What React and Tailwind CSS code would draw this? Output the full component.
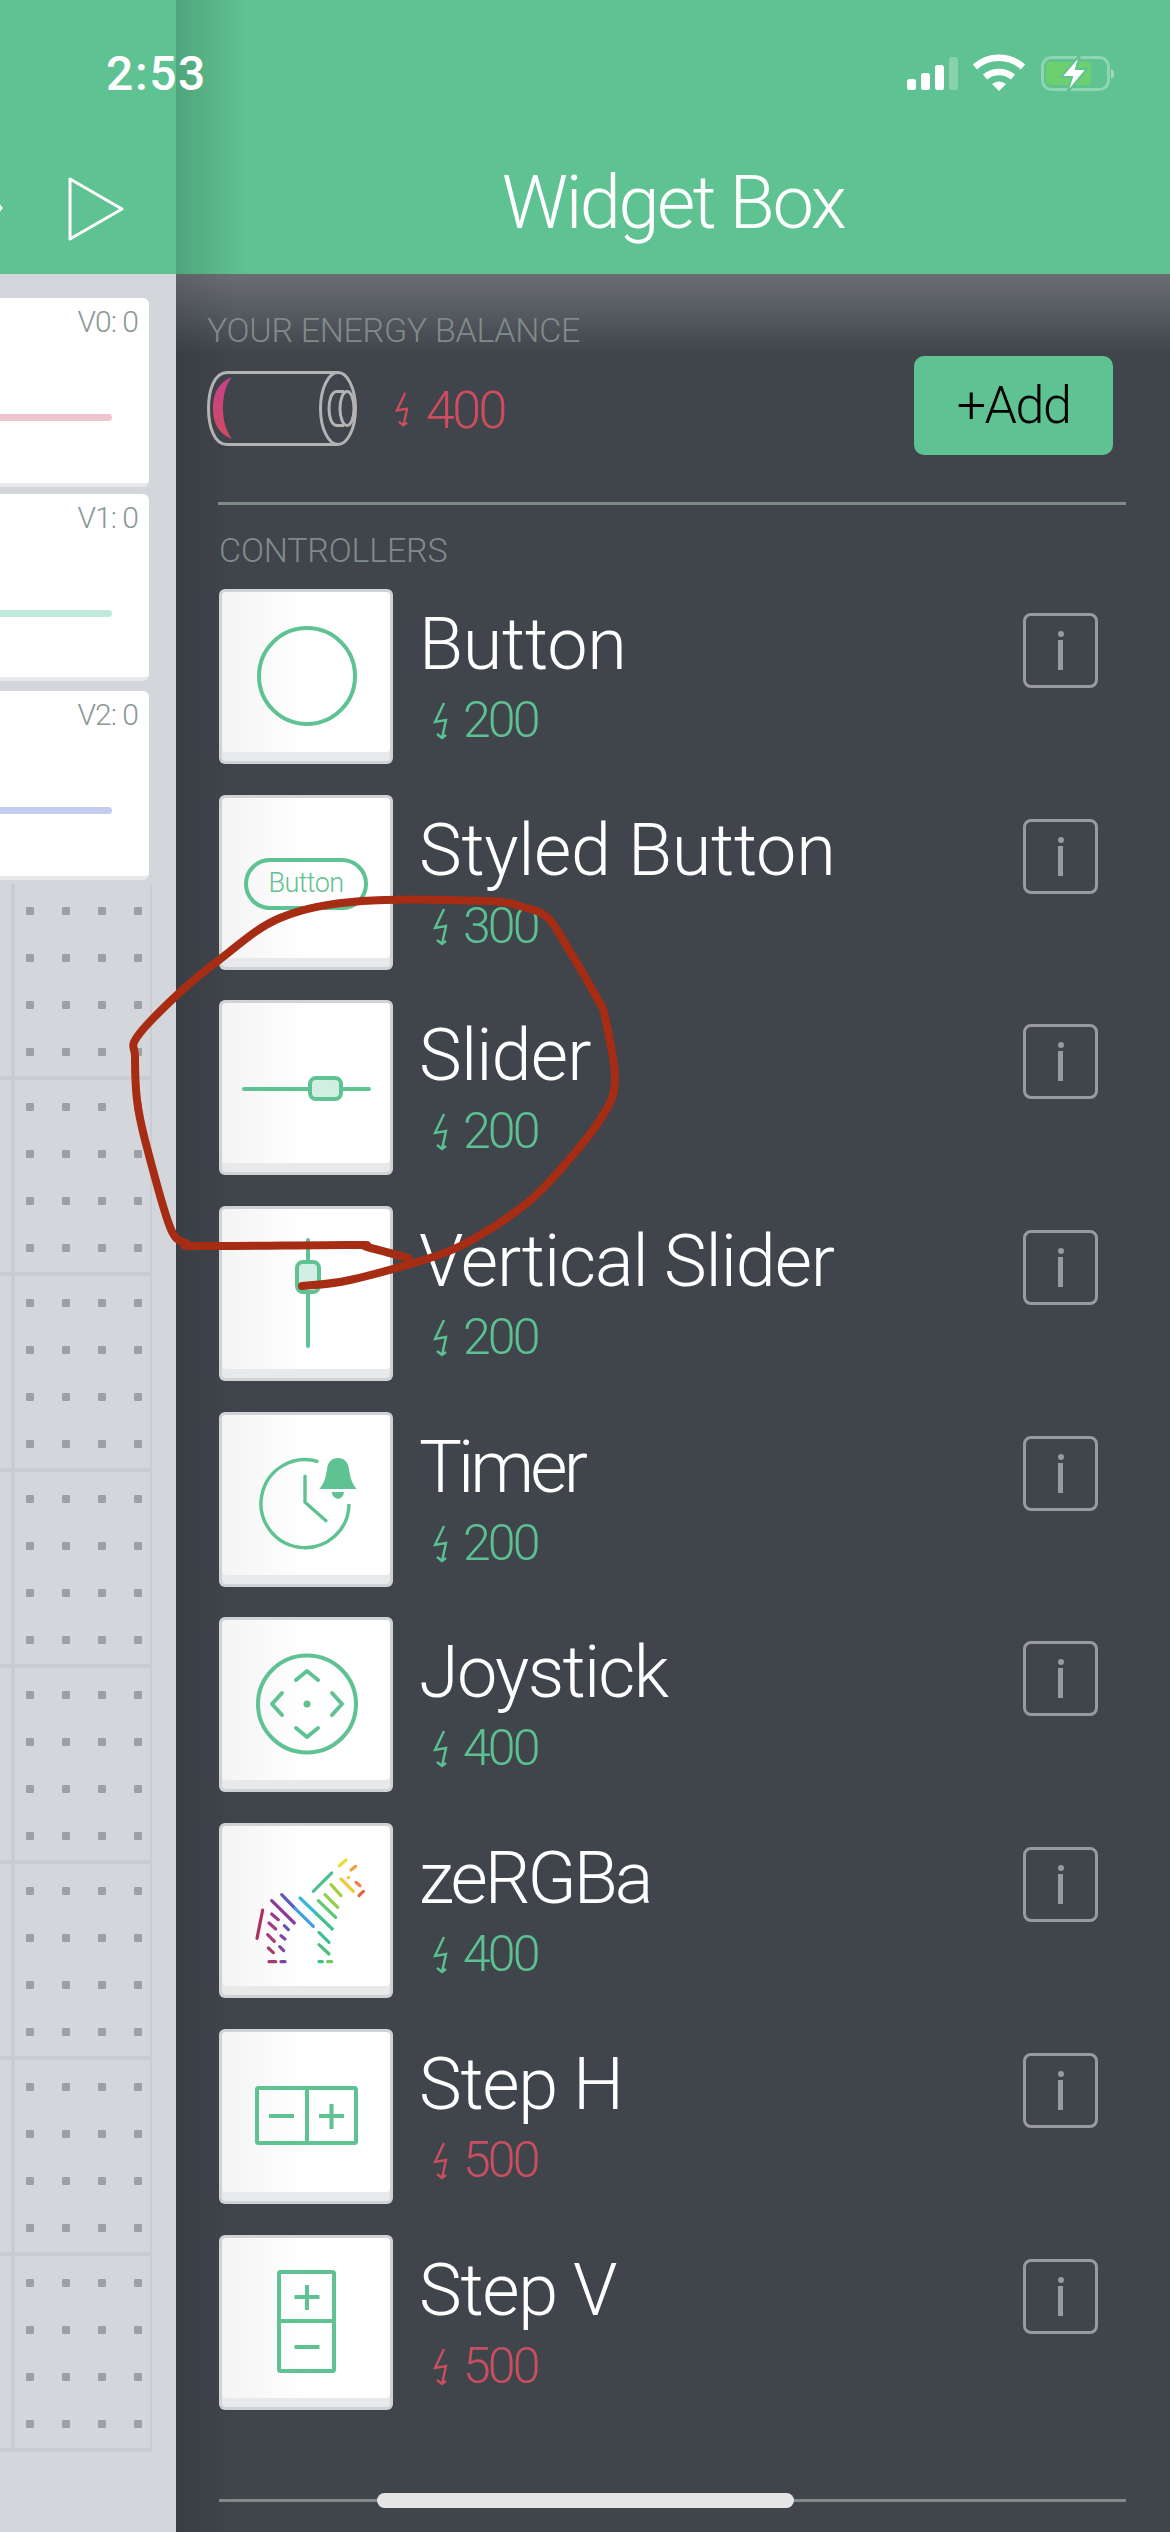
const GREEN = "#5fc292";
const RED = "#cf4b5f";

const font = { fontFamily: "Roboto, sans-serif" };

function Bolt({ color, className }) {
  return (
    <svg viewBox="0 0 15 38" className={className} fill="none" stroke={color} strokeWidth="2.4">
      <path d="M11 1 L2 20 L13 18 L9 36 M4 32 L9 36 L13 33" />
    </svg>
  );
}

function Price({ value, red }) {
  return (
    <div className={`flex items-center h-[50px] pl-[14px] ${red ? "text-[#c94f60]" : "text-[#5cc092]"}`}>
      <Bolt color={red ? "#c94f60" : "#5cc092"} className="w-[15px] h-[38px] mt-[2px]" />
      <span className="ml-[15px] text-[50px] leading-[50px] font-light tracking-[-2.9px]">{value}</span>
    </div>
  );
}

// zebra stripes, measured on a 3x crop
const ZEBRA = [
  ["#b03060", 53, 183, 36, 268],
  ["#8a3a98", 80, 155, 148, 222],
  ["#5a58c0", 110, 137, 150, 178],
  ["#3f9fe0", 150, 178, 205, 232],
  ["#38b8d8", 165, 147, 215, 195],
  ["#3fc08e", 215, 195, 262, 240],
  ["#5cc870", 220, 155, 272, 205],
  ["#90d048", 240, 137, 278, 175],
  ["#50c090", 205, 127, 260, 72],
  ["#a0d040", 258, 107, 288, 140],
  ["#f0c838", 288, 90, 325, 127],
  ["#e8dc38", 283, 50, 303, 33],
  ["#f0a040", 318, 63, 332, 52],
  ["#f08050", 333, 100, 345, 110],
  ["#ee6040", 342, 140, 355, 127],
  ["#f0c040", 310, 85, 311, 86],
  ["#9a3a8c", 80, 195, 100, 212],
  ["#a83888", 72, 222, 92, 240],
  ["#a83878", 68, 257, 88, 277],
  ["#a8386f", 70, 297, 85, 311],
  ["#a83870", 72, 338, 92, 338],
  ["#6a50b0", 118, 230, 130, 242],
  ["#7a48a8", 108, 260, 120, 270],
  ["#7d46a0", 104, 293, 116, 305],
  ["#7a46a0", 108, 338, 120, 338],
  ["#3cc090", 222, 250, 252, 280],
  ["#48c078", 222, 287, 252, 315],
  ["#40c088", 222, 338, 232, 338],
  ["#70c860", 248, 338, 260, 338],
];

function Glyph({ name }) {
  const line = { fill: "none", stroke: GREEN, strokeWidth: 4, strokeLinecap: "round", strokeLinejoin: "round" };
  if (name === "styled") {
    return (
      <div className="absolute left-[25px] top-[63px] w-[124px] h-[52px] rounded-full border-[4px] border-[#5fc292] flex items-center justify-center text-[27px] leading-none font-light tracking-[-0.6px] text-[#5fc292]">
        Button
      </div>
    );
  }
  return (
    <svg viewBox="0 0 174 175" className="absolute inset-0 w-[174px] h-[175px]">
      {name === "button" && <circle cx="88" cy="87" r="48" {...line} />}
      {name === "slider" && (
        <g>
          <path d="M25 89 H91 M122 89 H150" {...line} />
          <rect x="91" y="78" width="31" height="21" rx="6" fill="#d0eee2" stroke={GREEN} strokeWidth="4" />
        </g>
      )}
      {name === "vslider" && (
        <g>
          <path d="M89 34 V56 M89 86 V140" {...line} />
          <rect x="78" y="56" width="22" height="30" rx="6" fill="#d0eee2" stroke={GREEN} strokeWidth="4" />
        </g>
      )}
      {name === "timer" && (
        <g>
          <path d="M99.3 49.7 A44 44 0 1 0 130 92" {...line} strokeWidth="3.4" strokeLinecap="butt" />
          <path d="M86 64.3 V90.3 L107 108.7" {...line} strokeWidth="3.4" />
          <path d="M100.3 77 C106 70 107 64 108 57 C109 49 114 46 119 46 C124 46 129 49 130 57 C131 64 132 70 137.7 77 Z" fill={GREEN} />
          <path d="M112.7 80 H125 C124 89 114 89 112.7 80 Z" fill={GREEN} />
        </g>
      )}
      {name === "joystick" && (
        <g>
          <ellipse cx="88" cy="87" rx="49" ry="48.5" {...line} />
          <circle cx="88" cy="87" r="3.5" fill={GREEN} />
          <path d="M77 63 L88 54 L99 63 M77 111 L88 120 L99 111 M63 76 L53 87 L63 98 M113 76 L123 87 L113 98" {...line} />
        </g>
      )}
      {name === "zergba" &&
        ZEBRA.map(([c, x1, y1, x2, y2], i) => (
          <line
            key={i}
            x1={x1 / 3 + 26}
            y1={y1 / 3 + 26}
            x2={x2 / 3 + 26}
            y2={y2 / 3 + 26}
            stroke={c}
            strokeWidth="3.2"
            strokeLinecap="round"
          />
        ))}
      {name === "steph" && (
        <g>
          <rect x="38" y="59" width="99" height="55" rx="1.5" {...line} />
          <path d="M88 59 V114 M50 87 H75 M100 87 H125 M112.5 75 V100" {...line} strokeLinecap="butt" />
        </g>
      )}
      {name === "stepv" && (
        <g>
          <rect x="60" y="37" width="55" height="99" rx="1.5" {...line} />
          <path d="M60 86 H115 M75.5 62 H100.5 M88 50 V75 M75.5 112 H100.5" {...line} strokeLinecap="butt" />
        </g>
      )}
    </svg>
  );
}

function Tile({ name }) {
  return (
    <div className="relative shrink-0 w-[174px] h-[175px] rounded-[6px] bg-[#d0d3d6] p-[3px]">
      <div className="h-full rounded-[4px] bg-[#e8e9eb]">
        <div className="h-[160px] rounded-[4px] bg-gradient-to-r from-[#f4f4f5] via-white to-white" />
      </div>
      <Glyph name={name} />
    </div>
  );
}

function InfoButton() {
  return (
    <div className="ml-auto mt-[24px] w-[75px] h-[75px] rounded-[8px] border-[3px] border-[#979b9e] flex flex-col items-center pt-[15px]">
      <div className="w-[6px] h-[6px] rounded-full bg-[#979b9e]" />
      <div className="mt-[3px] w-[5px] h-[30px] bg-[#979b9e]" />
    </div>
  );
}

function WidgetRow({ icon, title, price, red, tracking }) {
  return (
    <div className="flex h-[175px] mb-[30.7px]">
      <Tile name={icon} />
      <div className="ml-[26px] pt-[16px]">
        <div className={`text-[72px] leading-[80px] font-light text-white whitespace-nowrap ${tracking}`}>{title}</div>
        <div className="mt-[10px]">
          <Price value={price} red={red} />
        </div>
      </div>
      <InfoButton />
    </div>
  );
}

function ValueCard({ label, color, height, gap }) {
  return (
    <div className={`relative w-[149px] ${height} ${gap} bg-white rounded-r-[6px] border-b-[4px] border-[#e8e9eb]`}>
      <div className="text-right pr-[11px] pt-[6px] text-[30px] leading-[36px] font-light tracking-[-1px] text-[#8b9895]">{label}</div>
      <div className={`mt-[74px] w-[112px] h-[7px] rounded-r-full ${color}`} />
    </div>
  );
}

function GridCell() {
  return (
    <div className="h-[196px] w-[152px] border-b-[4px] border-r-[2px] border-[#c9cdd1] flex">
      <div className="ml-[11px] w-[4px] bg-[#c9cdd1]" />
      <div className="ml-[11px] pt-[23px] flex flex-col gap-[39px]">
        {[0, 1, 2, 3].map((r) => (
          <div key={r} className="flex gap-[28px]">
            {[0, 1, 2, 3].map((c) => (
              <div key={c} className="w-[8px] h-[8px] rounded-[1px] bg-[#9da1a5]" />
            ))}
          </div>
        ))}
      </div>
    </div>
  );
}

function StatusBar() {
  return (
    <div className="absolute inset-x-0 top-0 h-[110px] text-white">
      <div className="absolute left-[106px] top-[46px] text-[48px] leading-[56px] font-medium tracking-[1.6px]">2:53</div>
      <svg viewBox="880 40 290 60" className="absolute left-[880px] top-[40px] w-[290px] h-[60px]">
        <rect x="907" y="79" width="9" height="11" rx="2.5" fill="#fff" />
        <rect x="921" y="73" width="9" height="17" rx="2.5" fill="#fff" />
        <rect x="935" y="65" width="9" height="25" rx="2.5" fill="#fff" />
        <rect x="949" y="57" width="9" height="33" rx="2.5" fill="#fff" fillOpacity="0.25" />
        <path d="M975 67 A36 36 0 0 1 1023 67" stroke="#fff" strokeWidth="6.5" fill="none" />
        <path d="M985 77 A22 22 0 0 1 1013 77" stroke="#fff" strokeWidth="6.5" fill="none" />
        <path d="M992 84 A11 11 0 0 1 1006 84 L999 91 Z" fill="#fff" />
        <rect x="1042.5" y="57.5" width="66" height="32" rx="9" fill="none" stroke="#fff" strokeOpacity="0.3" strokeWidth="3" />
        <rect x="1046" y="62" width="45" height="23" rx="4" fill="#6dd06e" />
        <path d="M1111 69 C1115 70 1115 78 1111 79 Z" fill="#fff" fillOpacity="0.4" />
        <path d="M1080 55 L1061 77 H1072 L1067 93 L1087 69 H1076 Z" fill="#fff" stroke={GREEN} strokeWidth="2" />
      </svg>
    </div>
  );
}

// hand-drawn circle on top of the screenshot
const SCRIBBLE = [
  [302, 1286], [350, 1280], [433, 1257], [477, 1237], [527, 1203], [560, 1170], [600, 1120], [615, 1081],
  [605, 1017], [598, 1000], [569, 950], [548, 918], [523, 907], [487, 901], [362, 901], [280, 918],
  [219, 960], [177, 995], [137, 1037], [135, 1057], [137, 1100], [145, 1140], [170, 1227], [186, 1243],
  [200, 1246], [353, 1245], [367, 1247], [408, 1258],
];

function smoothPath(pts) {
  let d = `M${pts[0][0]} ${pts[0][1]}`;
  for (let i = 0; i < pts.length - 1; i++) {
    const p0 = pts[Math.max(i - 1, 0)];
    const p1 = pts[i];
    const p2 = pts[i + 1];
    const p3 = pts[Math.min(i + 2, pts.length - 1)];
    d += ` C${p1[0] + (p2[0] - p0[0]) / 6} ${p1[1] + (p2[1] - p0[1]) / 6} ${p2[0] - (p3[0] - p1[0]) / 6} ${p2[1] - (p3[1] - p1[1]) / 6} ${p2[0]} ${p2[1]}`;
  }
  return d;
}

const WIDGETS = [
  { icon: "button", title: "Button", price: "200", tracking: "tracking-[-0.3px]" },
  { icon: "styled", title: "Styled Button", price: "300", tracking: "tracking-[-0.3px]" },
  { icon: "slider", title: "Slider", price: "200", tracking: "tracking-[-0.8px]" },
  { icon: "vslider", title: "Vertical Slider", price: "200", tracking: "tracking-[-1.1px]" },
  { icon: "timer", title: "Timer", price: "200", tracking: "tracking-[-3.9px]" },
  { icon: "joystick", title: "Joystick", price: "400", tracking: "tracking-[-1.7px]" },
  { icon: "zergba", title: "zeRGBa", price: "400", tracking: "tracking-[-3px]" },
  { icon: "steph", title: "Step H", price: "500", red: true, tracking: "tracking-[-1.3px]" },
  { icon: "stepv", title: "Step V", price: "500", red: true, tracking: "tracking-[-1.3px]" },
];

export default function App() {
  return (
    <div className="relative flex w-[1170px] h-[2532px] overflow-hidden bg-[#d3d6da]" style={font}>
      <div className="w-[176px] shrink-0 overflow-hidden">
        <div className="relative h-[274px] bg-[#5fc292]">
          <svg viewBox="0 0 176 274" className="absolute inset-0 w-[176px] h-[274px]" fill="none" stroke="#fff" strokeWidth="3" strokeLinejoin="round">
            <path d="M70 179 V239 L122 209 Z" />
            <path d="M-3 203 L1 208 L-3 213" />
          </svg>
        </div>
        <div className="pt-[24px]">
          <ValueCard label="V0: 0" color="bg-[#eec5cf]" height="h-[189px]" gap="mb-[7px]" />
          <ValueCard label="V1: 0" color="bg-[#bfeadb]" height="h-[187px]" gap="mb-[10px]" />
          <ValueCard label="V2: 0" color="bg-[#c5cdee]" height="h-[189px]" gap="mb-0" />
        </div>
        <div className="pt-[4px]">
          {[0, 1, 2, 3, 4, 5, 6, 7].map((i) => (
            <GridCell key={i} />
          ))}
        </div>
      </div>

      <div className="relative flex-1 min-w-0 bg-[#3f454b]">
        <div className="relative h-[274px] bg-[#5fc292] flex items-center justify-center pt-[132px]">
          <div className="absolute inset-y-0 left-0 w-[70px] bg-gradient-to-r from-black/15 to-transparent" />
          <h1 className="text-[74px] leading-[88px] font-light tracking-[-2.5px] text-white">Widget Box</h1>
        </div>
        <div className="absolute left-0 right-0 top-[274px] h-[80px] bg-gradient-to-b from-[#6a6e73] to-transparent" />
        <div className="absolute left-0 top-[274px] bottom-0 w-[60px] bg-gradient-to-r from-black/10 to-transparent" />

        <div className="relative">
          <div className="pl-[31px] pt-[36px] text-[34px] leading-[40px] font-light tracking-[-0.3px] text-[#7f8b88]">YOUR ENERGY BALANCE</div>
          <div className="flex items-center h-[99px] mt-[6px] pl-[31px] pr-[57px]">
            <svg viewBox="0 0 150 75" className="w-[150px] h-[75px] mt-[5px]" fill="none" stroke="#b3b3b3" strokeWidth="3">
              <defs>
                <linearGradient id="charge" x1="0" y1="0" x2="0" y2="1">
                  <stop offset="0" stopColor="#c8408a" />
                  <stop offset="1" stopColor="#cf4b5f" />
                </linearGradient>
              </defs>
              <path d="M131 1.5 H20 C7 1.5 1.5 20 1.5 37.5 C1.5 55 7 73.5 20 73.5 H131" />
              <ellipse cx="131" cy="37.5" rx="17.5" ry="36" />
              <path d="M137 20.5 H130 C124 20.5 122 30 122 37.5 C122 45 124 54.5 130 54.5 H137" />
              <ellipse cx="140" cy="37.5" rx="7" ry="17" />
              <path d="M25 6 C10 12 6 25 6 37 C6 50 10 62 25 68 C18 58 16 48 16 37 C16 26 18 15 25 6 Z" fill="url(#charge)" stroke="none" />
            </svg>
            <Bolt color={RED} className="ml-[38px] w-[14px] h-[37px] mt-[8px]" />
            <span className="ml-[17px] mt-[10px] text-[52px] leading-[52px] font-light tracking-[-2.6px] text-[#cf4b5f]">400</span>
            <button className="ml-auto w-[199px] h-[99px] rounded-[10px] bg-[#5fc292] text-black text-[52px] font-light tracking-[-1.5px]">+Add</button>
          </div>
          <div className="mt-[47px] ml-[42px] mr-[44px] h-[3px] bg-[#7f8b86]" />
          <div className="mt-[25px] ml-[43px] text-[34px] leading-[40px] font-light tracking-[-0.2px] text-[#7f8b88]">CONTROLLERS</div>
          <div className="mt-[19px] pl-[43px] pr-[72px]">
            {WIDGETS.map((w) => (
              <WidgetRow key={w.title} {...w} />
            ))}
          </div>
          <div className="mt-[89px] ml-[43px] mr-[44px] h-[3px] bg-[#7f8b86]" />
        </div>
      </div>

      <StatusBar />
      <div className="absolute left-[377px] top-[2493px] w-[417px] h-[15px] rounded-full bg-[#e5e5e5]" />
      <svg viewBox="0 0 1170 2532" className="absolute inset-0 w-[1170px] h-[2532px] pointer-events-none">
        <path d={smoothPath(SCRIBBLE)} fill="none" stroke="#a62c14" strokeWidth="8" strokeLinecap="round" strokeLinejoin="round" />
      </svg>
    </div>
  );
}
